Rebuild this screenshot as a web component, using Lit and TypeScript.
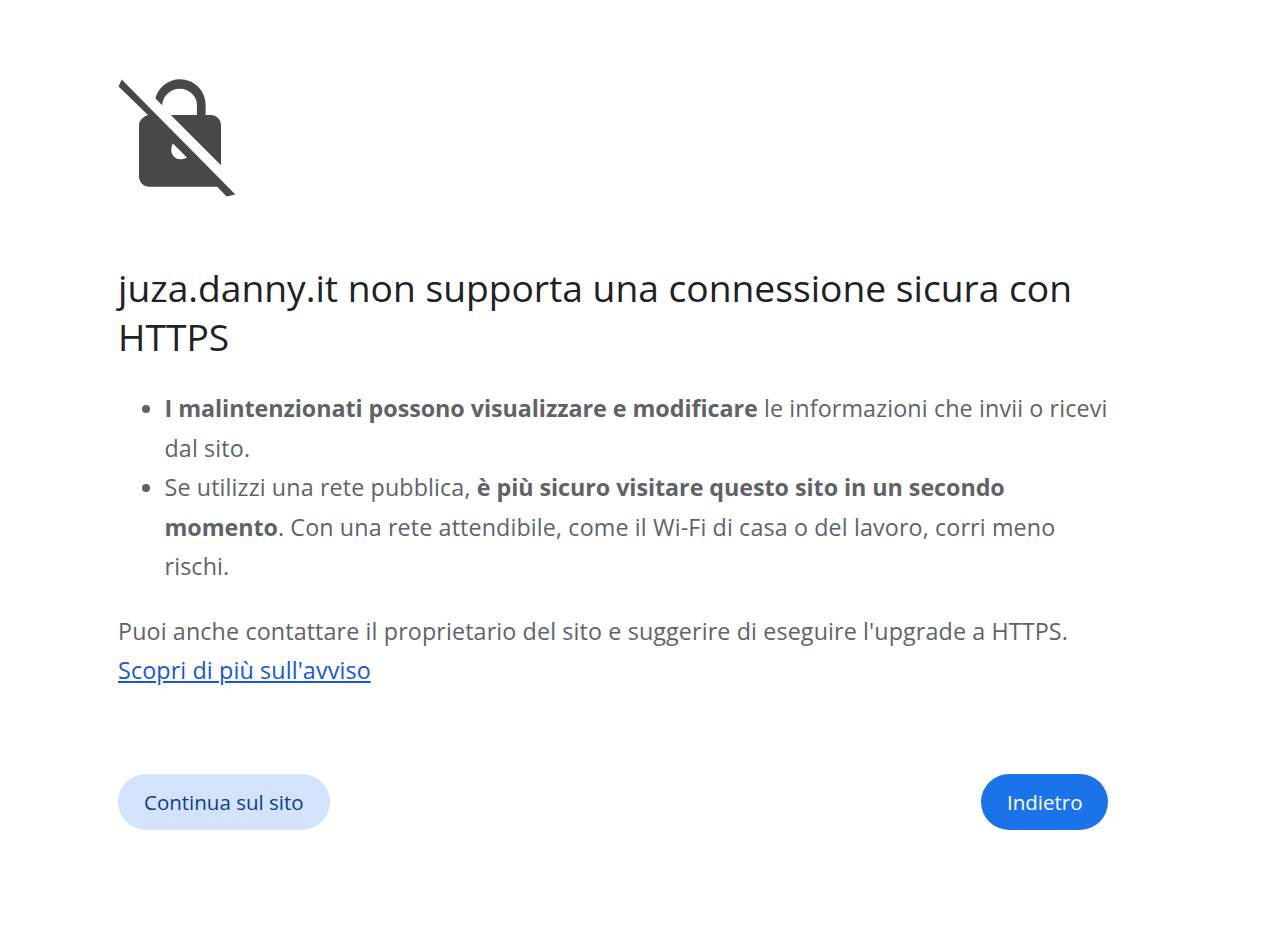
import { LitElement, html, css } from "lit";
import { customElement } from "lit/decorators.js";

@customElement("app-root")
export class AppRoot extends LitElement {
  static styles = css`
    :host { display: block; background: #fff; min-height: 928px; font-family: "Open Sans", "Noto Sans", sans-serif; }
    .page { box-sizing: border-box; width: 990px; margin-left: 118px; padding-top: 74px; }
    .icon { display: block; width: 123px; height: 123px; }
    h1 { margin: 66px 0 0; font-size: 37.2px; line-height: 49px; font-weight: 400; color: #202124; }
    ul { margin: 28px 0 0; padding: 0 0 0 46.5px; color: #5f6368; font-size: 23.3px; line-height: 39.5px; letter-spacing: 0.12px; }
    b { letter-spacing: -0.05px; }
    p { margin: 25px 0 0; color: #5f6368; font-size: 23.3px; line-height: 39.5px; letter-spacing: 0.12px; }
    a { color: #1558d6; display: block; }
    .buttons { display: flex; justify-content: space-between; margin-top: 83px; }
    button { height: 56px; border: 0; border-radius: 28px; padding: 0 26px; font: inherit; font-size: 20.5px; }
    .secondary { background: #d3e3fd; color: #0b3d91; }
    .primary { background: #1a73e8; color: #fff; padding: 0 25.5px; }
  `;
  render() {
    return html`<div class="page">
      <svg class="icon" viewBox="0 0 24 24" fill="#484848">
        <path fill-rule="evenodd" d="M0.72 1.07 L22.9 23.5 L21.2 23.9 L19.35 22 H6.1 c-1.1 0-2-.9-2-2 V10 c0-.85.7-1.6 1.75-2 L0.1 2.45 Z M12.15 16.65 c-1.05 0-1.75-.85-1.75-1.75 0-.5.1-1 .3-1.35 l2.75 2.75 c-.35.2-.8.35-1.3.35 Z"/>
        <path d="M10.3 8 L20.1 17.8 V10 c0-1.1-.9-2-2-2 h-1 V6 c0-2.76-2.24-5-5-5 -2.32 0-4.26 1.59-4.82 3.74 L8.6 6.1 c.2-1.85 1.6-3.2 3.5-3.2 1.71 0 3.3 1.39 3.3 3.1 v2 Z"/>
      </svg>
      <h1>juza.danny.it non supporta una connessione sicura con HTTPS</h1>
      <ul>
        <li><b>I malintenzionati possono visualizzare e modificare</b> le informazioni che invii o ricevi dal sito.</li>
        <li>Se utilizzi una rete pubblica, <b>è più sicuro visitare questo sito in un secondo momento</b>. Con una rete attendibile, come il Wi-Fi di casa o del lavoro, corri meno rischi.</li>
      </ul>
      <p>Puoi anche contattare il proprietario del sito e suggerire di eseguire l'upgrade a HTTPS. <a href="#">Scopri di più sull'avviso</a></p>
      <div class="buttons">
        <button class="secondary">Continua sul sito</button>
        <button class="primary">Indietro</button>
      </div>
    </div>`;
  }
}
